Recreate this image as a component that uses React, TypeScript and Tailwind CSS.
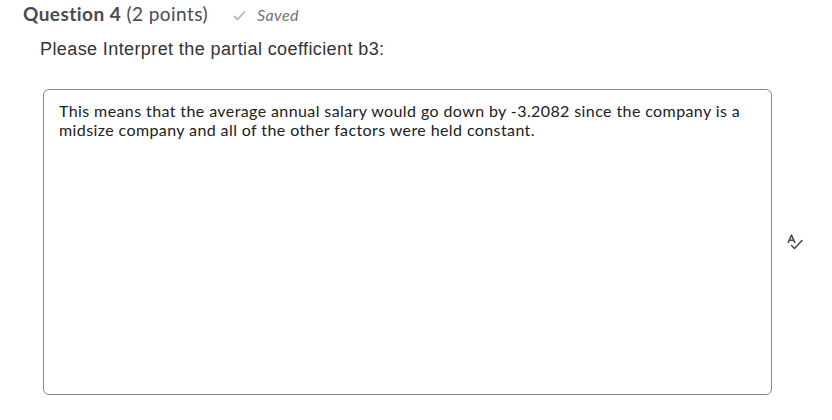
export default function App() {
    return (
        <div className="w-[832px] h-[420px] bg-white overflow-hidden font-['Lato',sans-serif]">
            <div className="flex items-baseline pl-[23px] pt-[1px] h-[28px]">
                <h2 className="text-[19px] leading-[26px] tracking-[0.45px] text-[#494c4e]">
                    <span className="font-bold">Question 4</span> (2 points)
                </h2>
                <span className="ml-[25px] flex items-baseline text-[16px] italic tracking-[0.4px] text-[#6e7376]">
                    <svg width="13" height="11" viewBox="0 0 13 11" className="mr-[11px] self-center">
                        <path d="M1 6 L4.5 9.5 L12 1.5" fill="none" stroke="#b5b9bc" strokeWidth="1.8" />
                    </svg>
                    Saved
                </span>
            </div>
            <p className="mt-[10px] pl-[40px] text-[18px] leading-[22px] tracking-[0.4px] text-[#333] font-['Liberation_Sans',Arial,sans-serif]">
                Please Interpret the partial coefficient b3:
            </p>
            <div className="flex items-start mt-[29px]">
                <div className="ml-[43px] w-[729px] h-[306px] border border-[#868686] rounded-[6px] px-[15px] pt-[11px] text-[16px] leading-[19px] tracking-[0.4px] text-[#202122]">
                    This means that the average annual salary would go down by -3.2082 since the company is a midsize company and all of the other factors were held constant.
                </div>
                <div className="ml-[14px] mt-[145px] text-[#494c4e]">
                    <svg width="18" height="17" viewBox="0 0 18 17">
                        <path d="M2 9 L5.5 1 L9 9 M3.3 6.2 H7.7" fill="none" stroke="#494c4e" strokeWidth="1.6" strokeLinejoin="round" />
                        <path d="M5.5 11.5 L8.5 14.5 L16 6.5" fill="none" stroke="#494c4e" strokeWidth="1.6" strokeLinecap="round" strokeLinejoin="round" />
                    </svg>
                </div>
            </div>
        </div>
    )
}
